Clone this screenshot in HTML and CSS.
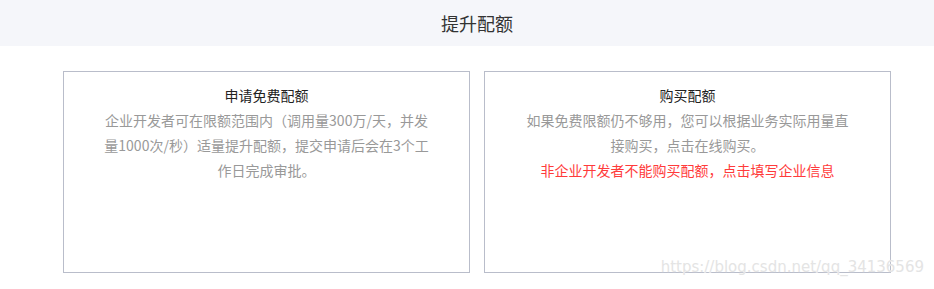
FILE: index.html
```html
<!DOCTYPE html>
<html lang="zh-CN">
<head>
    <meta charset="UTF-8">
    <meta name="viewport" content="width=device-width, initial-scale=1.0">
    <title>提升配额</title>
    <link rel="stylesheet" href="styles.css">
</head>
<body>
    <!-- Header -->
    <header class="page-header">
        <div class="container">
            <h1 class="page-title">提升配额</h1>
        </div>
    </header>

    <!-- Quota options -->
    <main class="container quota-list">
        <section class="quota-card">
            <h2 class="quota-title">申请免费配额</h2>
            <p class="quota-desc">企业开发者可在限额范围内（调用量300万/天，并发量1000次/秒）适量提升配额，提交申请后会在3个工作日完成审批。</p>
        </section>
        <section class="quota-card">
            <h2 class="quota-title">购买配额</h2>
            <p class="quota-desc">如果免费限额仍不够用，您可以根据业务实际用量直接购买，点击在线购买。</p>
            <p class="quota-warn">非企业开发者不能购买配额，点击填写企业信息</p>
        </section>
    </main>

    <div class="watermark">https://blog.csdn.net/qq_34136569</div>
</body>
</html>
```

FILE: styles.css
```css
/* Base styles */
body {
    margin: 0;
    padding: 0;
    font-family: "Noto Sans CJK SC", "Noto Sans", sans-serif;
    background-color: #fff;
    color: #333;
    position: relative;
    height: 289px;
    overflow: hidden;
}

.container {
    width: 828px;
    margin-left: 63px;
}

/* Header */
.page-header {
    background-color: #f5f6fa;
    height: 46px;
}

.page-title {
    margin: 0;
    font-size: 18px;
    font-weight: normal;
    line-height: 46px;
    text-align: center;
    color: #333;
}

/* Quota cards */
.quota-list {
    display: flex;
    gap: 14px;
    margin-top: 25px;
}

.quota-card {
    width: 407px;
    height: 202px;
    box-sizing: border-box;
    border: 1px solid #b9bdca;
    padding: 11px 40px 0;
    text-align: center;
    font-size: 14px;
    line-height: 25px;
}

.quota-title {
    margin: 0;
    font-size: 14px;
    font-weight: normal;
    color: #222;
}

.quota-desc {
    margin: 0;
    color: #999;
}

.quota-warn {
    margin: 0;
    color: #ff3b3b;
}

/* Watermark */
.watermark {
    position: absolute;
    right: 10px;
    top: 258px;
    font-family: "DejaVu Sans", sans-serif;
    font-size: 15px;
    color: #e4e4e4;
    text-shadow: 0 0 1px #fff;
    pointer-events: none;
}
```
